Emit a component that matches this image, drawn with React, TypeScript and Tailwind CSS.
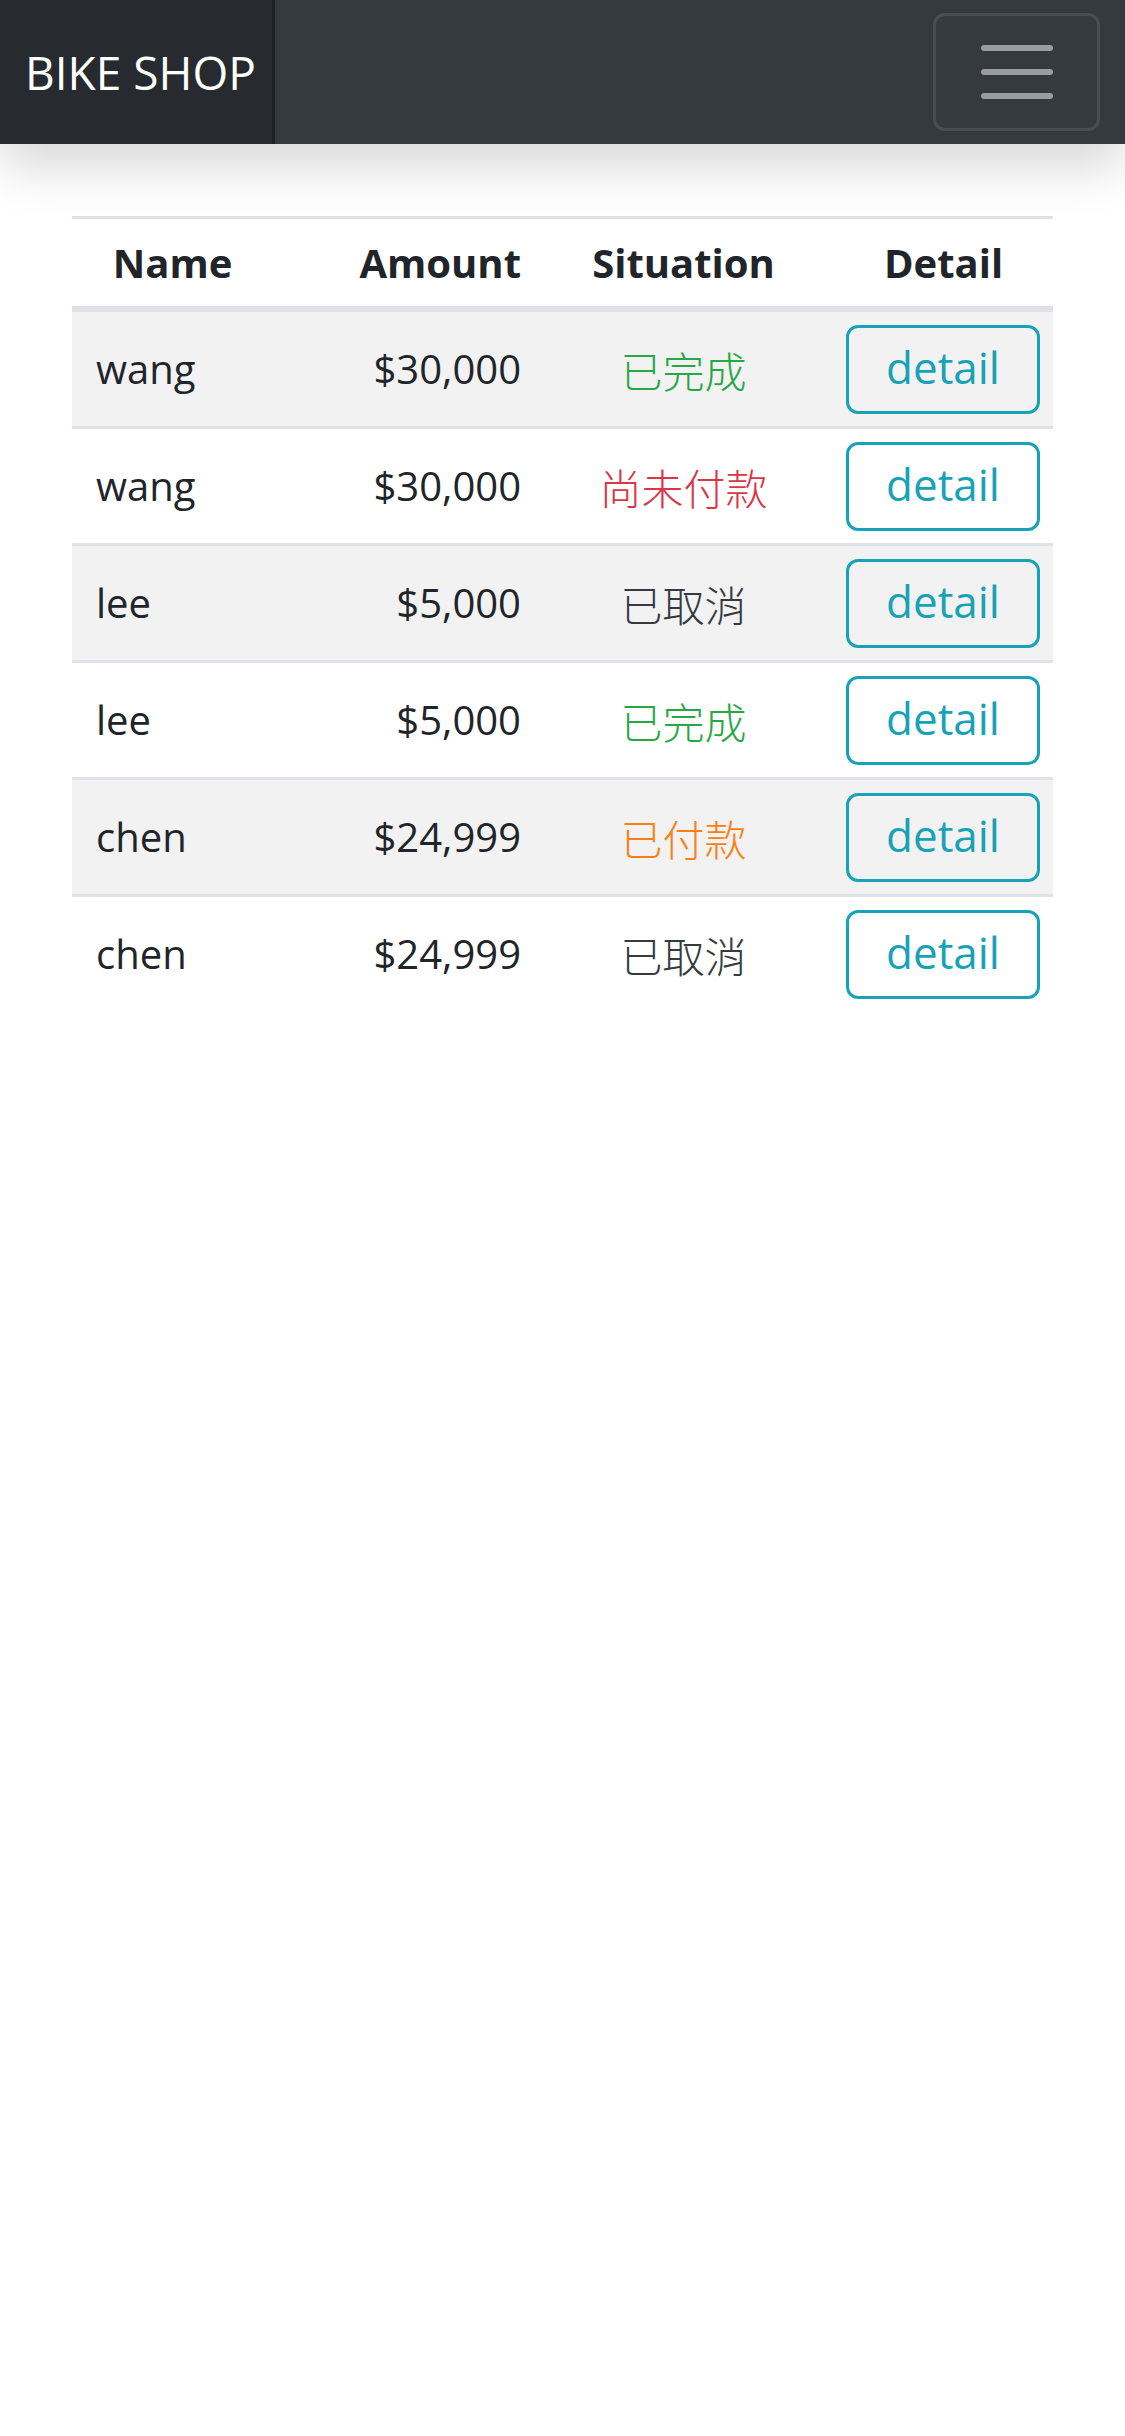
import React from "react";

type Order = {
  name: string;
  amount: string;
  status: string;
  tone: "done" | "unpaid" | "cancel" | "paid";
};

const orders: Order[] = [
  { name: "wang", amount: "$30,000", status: "已完成", tone: "done" },
  { name: "wang", amount: "$30,000", status: "尚未付款", tone: "unpaid" },
  { name: "lee", amount: "$5,000", status: "已取消", tone: "cancel" },
  { name: "lee", amount: "$5,000", status: "已完成", tone: "done" },
  { name: "chen", amount: "$24,999", status: "已付款", tone: "paid" },
  { name: "chen", amount: "$24,999", status: "已取消", tone: "cancel" },
];

const toneClass = {
  done: "text-[#28a745]",
  unpaid: "text-[#dc3545]",
  cancel: "text-[#343a40]",
  paid: "text-[#fd7e14]",
};

const cols = "grid grid-cols-[201px_272px_277px_231px]";

function Navbar() {
  return (
    <nav className="relative z-10 flex h-[144px] items-center bg-[#343a40] shadow-[0_24px_48px_rgba(0,0,0,0.15)]">
      <a className="flex h-full w-[275px] items-center bg-[#272b30] pl-[25px] text-[46px] text-white shadow-[inset_-3px_0_0_rgba(0,0,0,0.25)]">
        BIKE SHOP
      </a>
      <div className="flex-1" />
      <button className="mr-[25px] flex h-[118px] w-[167px] flex-col items-center justify-center gap-[18px] rounded-[12px] border-[3px] border-white/10">
        <span className="h-[6px] w-[72px] rounded-full bg-[#9a9da0]" />
        <span className="h-[6px] w-[72px] rounded-full bg-[#9a9da0]" />
        <span className="h-[6px] w-[72px] rounded-full bg-[#9a9da0]" />
      </button>
    </nav>
  );
}

export default function App() {
  return (
    <div className="min-h-screen bg-white font-['Open_Sans','Noto_Sans_CJK_TC',sans-serif] text-[#212529]">
      <Navbar />
      <main className="mx-[72px] mt-[72px]">
        <div className="border-t-[3px] border-[#dee2e6]">
          <div className={`${cols} h-[93px] items-center border-b-[6px] border-[#dee2e6] text-[40px] font-bold`}>
            <div className="px-[24px] text-center">Name</div>
            <div className="px-[24px] text-right">Amount</div>
            <div className="px-[24px] text-center">Situation</div>
            <div className="pl-[30px] pr-[18px] text-center">Detail</div>
          </div>
          {orders.map((o, i) => (
            <div
              key={i}
              className={`${cols} items-center text-[40px] ${i > 0 ? "h-[117px] border-t-[3px] border-[#dee2e6]" : "h-[114px]"} ${i % 2 === 0 ? "bg-[#f2f2f2]" : "bg-white"}`}
            >
              <div className="px-[24px]">{o.name}</div>
              <div className="px-[24px] text-right">{o.amount}</div>
              <div className={`px-[24px] text-center font-['Noto_Sans_CJK_TC',sans-serif] text-[42px] font-light ${toneClass[o.tone]}`}>
                {o.status}
              </div>
              <div className="pl-[24px]">
                <button className="flex h-[89px] w-[194px] items-center justify-center rounded-[12px] border-[3px] border-[#17a2b8] pb-[4px] text-[44px] text-[#17a2b8]">
                  detail
                </button>
              </div>
            </div>
          ))}
        </div>
      </main>
    </div>
  );
}
